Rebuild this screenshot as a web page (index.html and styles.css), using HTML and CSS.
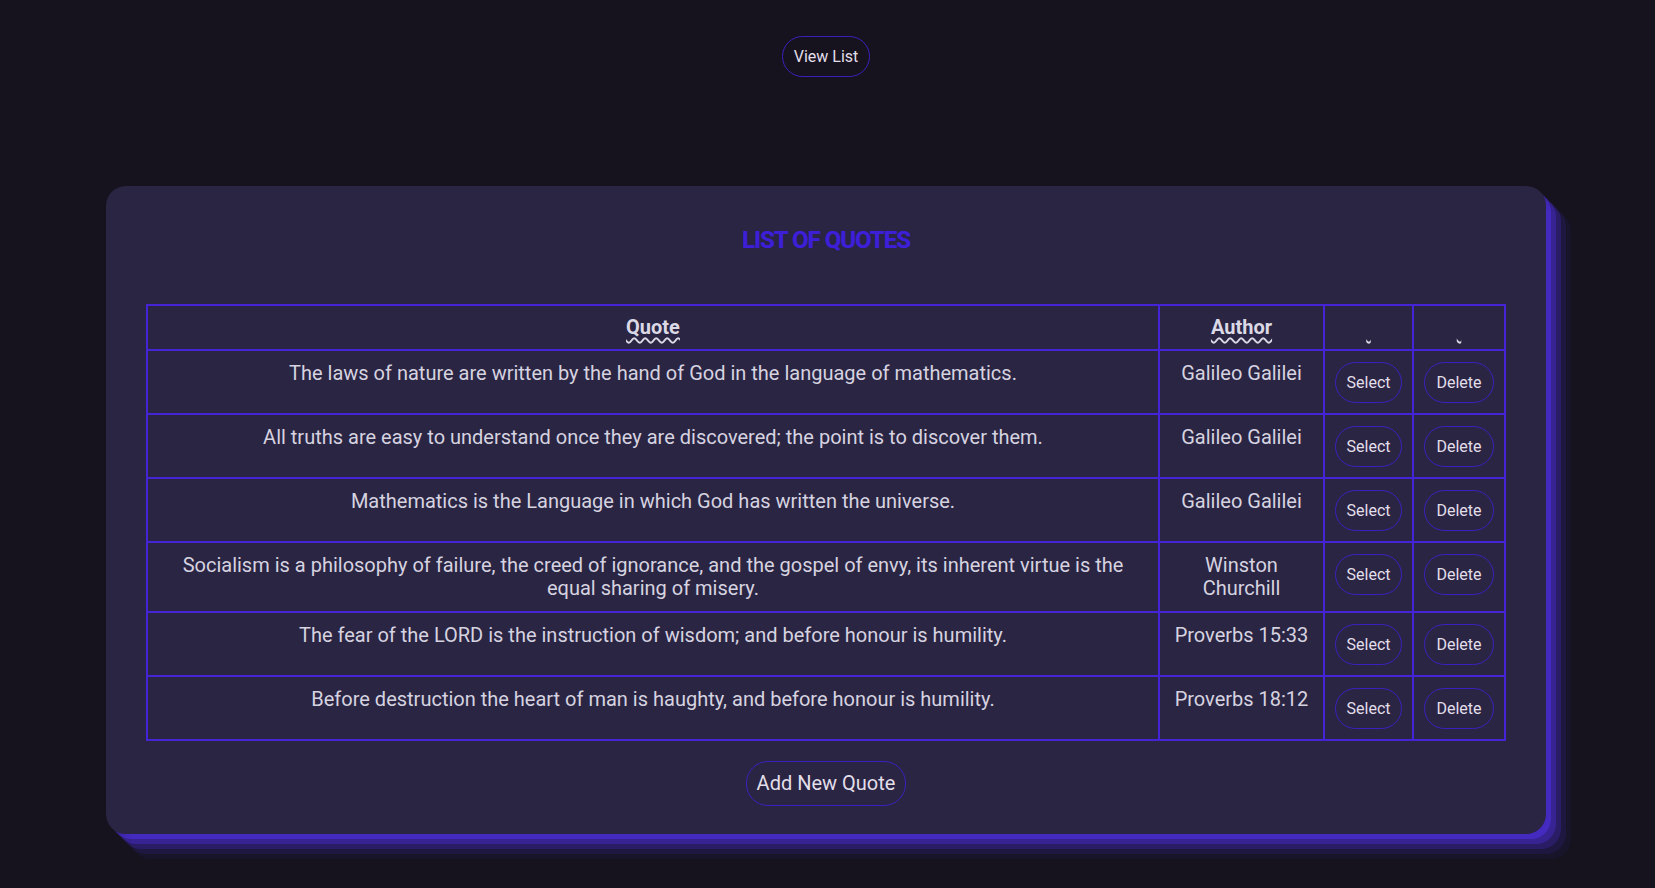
FILE: index.html
```html
<!DOCTYPE html>
<html lang="en">
<head>
<meta charset="utf-8">
<title>Quotes</title>
<link rel="stylesheet" href="styles.css">
</head>
<body>
<nav class="topbar">
  <button class="btn">View List</button>
</nav>
<main class="card">
  <h2 class="title">LIST OF QUOTES</h2>
  <table class="quotes">
    <thead>
      <tr>
        <th class="col-quote"><span class="wavy">Quote</span></th>
        <th class="col-author"><span class="wavy">Author</span></th>
        <th class="col-select"><span class="wavy mark">&nbsp;</span></th>
        <th class="col-delete"><span class="wavy mark">&nbsp;</span></th>
      </tr>
    </thead>
    <tbody>
      <tr>
        <td>The laws of nature are written by the hand of God in the language of mathematics.</td>
        <td>Galileo Galilei</td>
        <td class="act"><button class="btn small">Select</button></td>
        <td class="act"><button class="btn small">Delete</button></td>
      </tr>
      <tr>
        <td>All truths are easy to understand once they are discovered; the point is to discover them.</td>
        <td>Galileo Galilei</td>
        <td class="act"><button class="btn small">Select</button></td>
        <td class="act"><button class="btn small">Delete</button></td>
      </tr>
      <tr>
        <td>Mathematics is the Language in which God has written the universe.</td>
        <td>Galileo Galilei</td>
        <td class="act"><button class="btn small">Select</button></td>
        <td class="act"><button class="btn small">Delete</button></td>
      </tr>
      <tr>
        <td>Socialism is a philosophy of failure, the creed of ignorance, and the gospel of envy, its inherent virtue is the equal sharing of misery.</td>
        <td>Winston Churchill</td>
        <td class="act"><button class="btn small">Select</button></td>
        <td class="act"><button class="btn small">Delete</button></td>
      </tr>
      <tr>
        <td>The fear of the LORD is the instruction of wisdom; and before honour is humility.</td>
        <td>Proverbs 15:33</td>
        <td class="act"><button class="btn small">Select</button></td>
        <td class="act"><button class="btn small">Delete</button></td>
      </tr>
      <tr>
        <td>Before destruction the heart of man is haughty, and before honour is humility.</td>
        <td>Proverbs 18:12</td>
        <td class="act"><button class="btn small">Select</button></td>
        <td class="act"><button class="btn small">Delete</button></td>
      </tr>
    </tbody>
  </table>
  <div class="footer">
    <button class="btn large">Add New Quote</button>
  </div>
</main>
</body>
</html>
```
FILE: styles.css
```css
html, body {
  margin: 0;
  padding: 0;
  background: #16131f;
}

body {
  font-family: Roboto, "Liberation Sans", sans-serif;
  color: #d6d3e0;
  min-height: 888px;
  padding-right: 3px;
}

.topbar {
  display: flex;
  justify-content: center;
  padding-top: 36px;
}

.btn {
  font-family: Roboto, "Liberation Sans", sans-serif;
  font-size: 16px;
  line-height: 23px;
  color: #e2dfea;
  background: transparent;
  border: 1px solid #3a21bf;
  border-radius: 22px;
  padding: 8px 11px;
  cursor: pointer;
}

.btn.small {
  padding: 8px 11px;
}

.btn.large {
  font-size: 20px;
  line-height: 25px;
  padding: 9px 10px;
}

.card {
  width: 1440px;
  box-sizing: border-box;
  margin: 109px auto 0;
  background: #2a2542;
  border-radius: 20px;
  padding: 40px 40px 28px;
  box-shadow:
    rgba(88, 52, 255, 0.4) 5px 5px,
    rgba(88, 52, 255, 0.3) 10px 10px,
    rgba(88, 52, 255, 0.2) 15px 15px,
    rgba(88, 52, 255, 0.1) 20px 20px,
    rgba(88, 52, 255, 0.05) 25px 25px;
}

.title {
  margin: 0 0 50px;
  text-align: center;
  font-family: Roboto, sans-serif;
  font-weight: 700;
  font-size: 24px;
  line-height: 28px;
  letter-spacing: -1px;
  color: #3d1fd8;
  text-shadow: 0 0 1px rgba(61, 31, 216, 0.6);
}

.quotes {
  width: 100%;
  table-layout: fixed;
  border-collapse: collapse;
  font-size: 20px;
  line-height: 23px;
}

.quotes th,
.quotes td {
  border: 2px solid #4524d8;
  padding: 11px 10px;
  text-align: center;
  vertical-align: top;
}

.quotes th {
  font-weight: 700;
  color: #dcd9e6;
  padding: 10px;
}

.col-author { width: 143px; }
.col-select { width: 67px; }
.col-delete { width: 70px; }

.wavy {
  text-decoration: underline wavy;
  text-underline-offset: 3px;
  text-decoration-thickness: 1.5px;
}

.mark {
  font-size: 18px;
}

.quotes td.act {
  padding: 10.5px 0;
}

.footer {
  display: flex;
  justify-content: center;
  margin-top: 20px;
}
```
